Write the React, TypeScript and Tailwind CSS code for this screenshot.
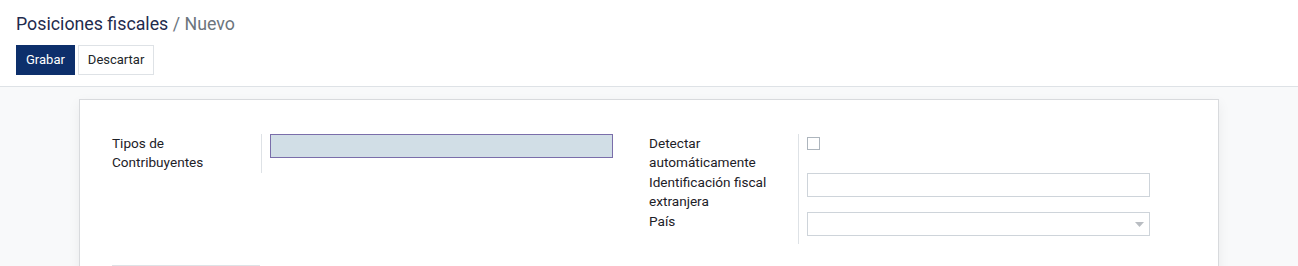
export default function App() {
  return (
    <div className="min-h-screen bg-[#f8f9fa] font-['Roboto',sans-serif] text-[13px] text-[#212529] overflow-hidden">
      {/* control panel */}
      <div className="bg-white border-b border-[#dee2e6] px-4 pt-[10px] pb-[11px]">
        <div className="text-[17.8px] leading-[27px] text-[#1f2b4d]">
          Posiciones fiscales <span className="text-[#6c757d]">/ Nuevo</span>
        </div>
        <div className="flex gap-[3px] mt-[8px]">
          <button className="h-[30px] px-[10px] bg-[#0d2f6b] text-white text-[13px]">Grabar</button>
          <button className="h-[30px] px-[9px] bg-white border border-[#dee2e6] text-[#212529] text-[13px]">Descartar</button>
        </div>
      </div>

      {/* sheet */}
      <div className="pt-3">
        <div className="mx-auto w-[1140px] bg-white border border-[#d8dadd] shadow-[0_4px_12px_rgba(0,0,0,0.06)] pt-[34px] pl-8 h-[200px]">
          <div className="flex text-[13.6px] text-[#1d2127]">
            <div className="w-[537px] pr-9">
              <div className="grid grid-cols-[149px_1fr]">
                <div className="leading-[19px] pb-px pr-2">Tipos de Contribuyentes</div>
                <div className="border-l border-[#dee2e6] pl-2">
                  <div className="h-6 bg-[#d1dee6] border border-[#7a6eaa]" />
                </div>
              </div>
            </div>
            <div className="w-[537px] pr-9">
              <div className="grid grid-cols-[149px_1fr]">
                <div className="leading-[19px] pb-px pr-2">Detectar automáticamente</div>
                <div className="border-l border-[#dee2e6] pl-2 pt-[3px]">
                  <div className="w-[13px] h-[13px] border border-[#adb5bd] bg-white" />
                </div>
                <div className="leading-[19px] pb-px pr-2">Identificación fiscal extranjera</div>
                <div className="border-l border-[#dee2e6] pl-2">
                  <div className="h-6 border border-[#ced4da] bg-white" />
                </div>
                <div className="leading-[19px] pr-2">País</div>
                <div className="border-l border-[#dee2e6] pl-2 pb-2">
                  <div className="h-6 border border-[#ced4da] bg-white flex items-center justify-end pr-[5px]">
                    <svg width="9" height="5" viewBox="0 0 9 5">
                      <path d="M0 0h9L4.5 5z" fill="#b9bdc2" />
                    </svg>
                  </div>
                </div>
              </div>
            </div>
          </div>
          <div className="mt-[21px] w-[148px] border-t border-[#dee2e6]" />
        </div>
      </div>
    </div>
  )
}
